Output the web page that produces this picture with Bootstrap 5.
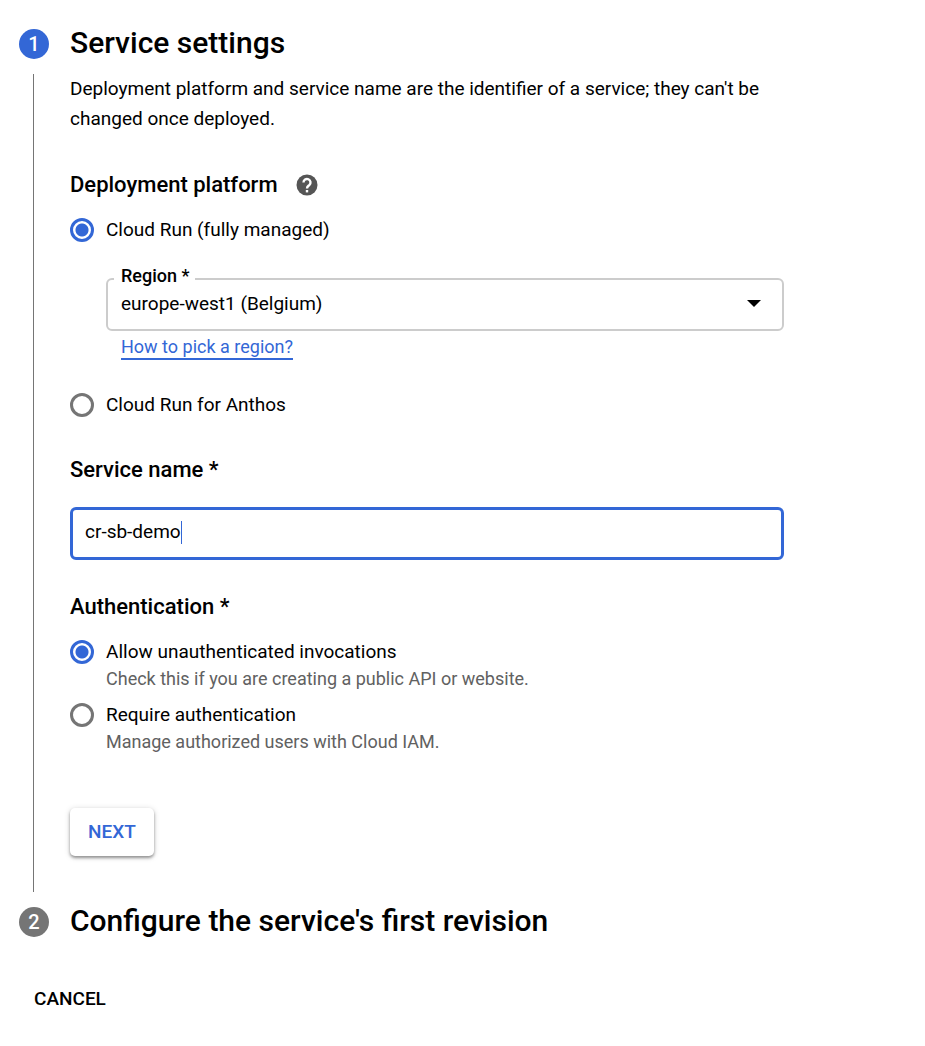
<!DOCTYPE html>
<html lang="en">
<head>
<meta charset="utf-8">
<meta name="viewport" content="width=device-width, initial-scale=1">
<title>Create service</title>
<link href="https://cdn.jsdelivr.net/npm/bootstrap@5.3.0/dist/css/bootstrap.min.css" rel="stylesheet">
<style>
  :root { --brand: #3367d6; --gray: #757575; }
  body { font-family: Roboto, sans-serif; font-size: 19px; line-height: 30px; color: #000; background: #fff; }
  .wizard { padding: 29px 19px; }
  .step-head { gap: 21px; }
  .step-num { width: 30px; height: 30px; font-size: 20px; font-weight: 500; color: #fff; background: var(--gray); }
  .step-num.current { background: var(--brand); }
  .step-title { font-size: 30px; line-height: 28px; padding-bottom: 2px; font-weight: 500; }
  .step-body { gap: 21px; margin: 15px 0; }
  .step-rail { width: 30px; padding-left: 14px; }
  .step-rail::before { content: ""; width: 1px; background: var(--gray); }
  .step-content { max-width: 714px; min-width: 0; padding-bottom: 36px; }
  .group-title { font-size: 22px; line-height: 30px; font-weight: 500; margin: 36px 0 15px; }
  .help-icon { margin-left: 18px; }
  .choice { gap: 12px; }
  .choice label { display: block; line-height: 29px; }
  .choice .form-check-input { width: 24px; height: 24px; margin: 3px 0 0; border: 3px solid var(--gray); }
  .choice .form-check-input:checked { border-color: var(--brand); background: radial-gradient(circle, var(--brand) 0 6px, #fff 7px); }
  .hint { font-size: 18px; line-height: 26px; color: #616161; }
  .region-field { margin: 34px 0 0 36px; }
  .region-field label { top: -14px; left: 8px; padding: 0 6px 0 7px; font-size: 18px; line-height: 24px; font-weight: 500; background: #fff; }
  .region-field select, .name-input { height: 53px; font-size: 19px; line-height: 30px; color: #000; border-radius: 6px; }
  .region-field select { padding: 6px 40px 8px 13px; border: 2px solid #ccc; background: #fff; }
  .region-field svg { right: 23px; top: 22px; }
  .region-link { display: inline-block; margin: 5px 0 30px 51px; font-size: 18px; line-height: 22px; color: var(--brand); border-bottom: 2px solid var(--brand); }
  .name-field { margin-top: 22px; }
  .name-input, .name-input:focus { padding: 4px 12px 8px; border: 3px solid var(--brand); color: #000; caret-color: transparent; box-shadow: none; }
  .name-caret { left: 111px; top: 14px; width: 1px; height: 23px; background: var(--brand); }
  .name-field + .group-title { margin-top: 32px; }
  .next-btn { height: 48px; margin-top: 53px; padding: 0 18px; font-size: 19px; font-weight: 500; color: var(--brand); background: #fff; border: 0; border-radius: 5px; box-shadow: 0 2px 3px rgba(0,0,0,.36), 0 1px 6px rgba(0,0,0,.16); }
  .cancel-btn { margin: 47px 0 0 15px; font-size: 19px; line-height: 30px; font-weight: 500; color: #000; border: 0; }
</style>
</head>
<body>
<form class="wizard">
  <section>
    <div class="step-head d-flex align-items-center">
      <span class="step-num current rounded-circle d-flex align-items-center justify-content-center flex-shrink-0">1</span>
      <h1 class="step-title mb-0">Service settings</h1>
    </div>
    <div class="step-body d-flex">
      <div class="step-rail d-flex flex-shrink-0"></div>
      <div class="step-content flex-grow-1">
        <p class="mb-0">Deployment platform and service name are the identifier of a service; they can't be changed once deployed.</p>

        <h2 class="group-title d-flex align-items-center">Deployment platform
          <svg class="help-icon" width="22" height="22" viewBox="0 0 22 22" role="img" aria-label="Help"><circle cx="11" cy="11" r="10.500" fill="#555"/><path d="M7.500 8.500a3.500 3.500 0 1 1 5.800 2.600C12 12.200 11 12.700 11 14.500" fill="none" stroke="#fff" stroke-width="2.400"/><path fill="#fff" d="M9.800 16h2.400v2.400H9.800z"/></svg>
        </h2>
        <div class="choice d-flex">
          <input class="form-check-input flex-shrink-0" type="radio" name="platform" id="managed" checked>
          <label for="managed">Cloud Run (fully managed)</label>
        </div>
        <div class="region-field position-relative">
          <label class="position-absolute" for="region">Region *</label>
          <select class="w-100 form-select" id="region"><option>europe-west1 (Belgium)</option></select>
          <svg class="position-absolute pe-none" width="14" height="7" viewBox="0 0 14 7" aria-hidden="true"><path d="M0 0h14L7 7z"/></svg>
        </div>
        <a class="region-link text-decoration-none" href="#">How to pick a region?</a>
        <div class="choice d-flex">
          <input class="form-check-input flex-shrink-0" type="radio" name="platform" id="anthos">
          <label for="anthos">Cloud Run for Anthos</label>
        </div>

        <h2 class="group-title"><label for="service">Service name *</label></h2>
        <div class="name-field position-relative">
          <input class="name-input form-control" type="text" id="service" value="cr-sb-demo" autocomplete="off" spellcheck="false">
          <span class="name-caret position-absolute pe-none"></span>
        </div>

        <h2 class="group-title">Authentication *</h2>
        <div class="choice d-flex">
          <input class="form-check-input flex-shrink-0" type="radio" name="auth" id="allow" checked>
          <div><label for="allow">Allow unauthenticated invocations</label><div class="hint">Check this if you are creating a public API or website.</div></div>
        </div>
        <div class="choice d-flex mt-2">
          <input class="form-check-input flex-shrink-0" type="radio" name="auth" id="require">
          <div><label for="require">Require authentication</label><div class="hint">Manage authorized users with Cloud IAM.</div></div>
        </div>
        <button class="next-btn btn" type="button">NEXT</button>
      </div>
    </div>
  </section>
  <section class="step-head d-flex align-items-center">
    <span class="step-num rounded-circle d-flex align-items-center justify-content-center flex-shrink-0">2</span>
    <h1 class="step-title mb-0">Configure the service's first revision</h1>
  </section>
  <button class="cancel-btn btn p-0" type="button">CANCEL</button>
</form>
<script src="https://cdn.jsdelivr.net/npm/bootstrap@5.3.0/dist/js/bootstrap.bundle.min.js"></script>
</body>
</html>
